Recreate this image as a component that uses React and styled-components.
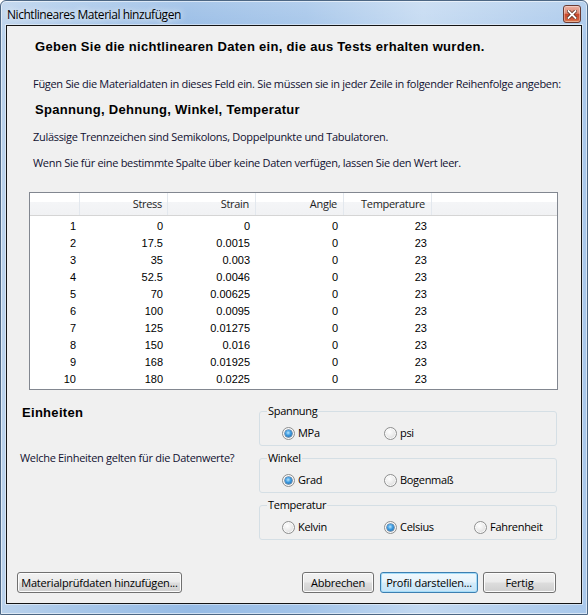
import React from 'react';
import styled, { createGlobalStyle, css } from 'styled-components';

const Global = createGlobalStyle`
  html, body { margin: 0; padding: 0; }
  body {
    width: 588px; height: 615px; overflow: hidden; background: #fff;
    font-family: "Open Sans", "Liberation Sans", sans-serif;
  }
  * { box-sizing: border-box; }
`;

const Window = styled.div`
  width: 588px; height: 615px;
  border: 1px solid #4d6784;
  border-radius: 6px 6px 0 0;
  background:
    linear-gradient(180deg, rgba(255,255,255,0.18) 0%, rgba(255,255,255,0) 40px),
    linear-gradient(90deg, #bad2ec 0%, #a8c7e9 12%, #96bbe5 32%, #a3c4e9 52%, #c3d9f1 72%, #b2ceed 90%, #a9c8eb 100%);
  box-shadow: inset 0 0 0 1px rgba(255,255,255,0.55);
  display: flex; flex-direction: column;
  padding: 0 5px 10px 5px;
`;

const TitleBar = styled.div`
  height: 24px; padding-top: 2px;
  display: flex; align-items: center;
`;

const Title = styled.div`
  font-size: 12px; letter-spacing: -0.45px; color: #000; padding-left: 1px;
  text-shadow: 0 0 6px rgba(255,255,255,0.9), 0 0 10px rgba(255,255,255,0.6);
`;

const CloseButton = styled.div`
  margin-left: auto; margin-right: 1px;
  width: 18px; height: 18px;
  border: 1px solid #6b3b33; border-radius: 3px;
  background: linear-gradient(180deg, #eab0a2 0%, #df8a74 45%, #c9472b 52%, #cf5d3c 85%, #e08a5e 100%);
  box-shadow: inset 0 0 0 1px rgba(255,255,255,0.35);
  display: flex; align-items: center; justify-content: center;
`;

const Client = styled.div`
  flex: 1;
  border: 1px solid #141414;
  box-shadow: 0 0 0 1px rgba(255,255,255,0.45);
  background: #f0f0f0;
  display: flex; flex-direction: column;
`;

const Heading = styled.div`
  font-family: "Liberation Sans", Arial, sans-serif;
  font-weight: bold; font-size: 13px; letter-spacing: 0.3px;
  line-height: 16px; color: #000;
  margin: ${p => p.$top}px 0 0 ${p => p.$left}px;
`;

const Para = styled.div`
  font-size: 11px; letter-spacing: -0.3px; line-height: 16px; color: #101030;
  white-space: nowrap;
  margin: ${p => p.$top}px 0 0 ${p => p.$left}px;
`;

const Table = styled.div`
  margin: 21px 0 0 22px;
  width: 529px; height: 198px;
  border: 1px solid #828790;
  background: #fff;
`;

const cols = css`
  display: grid;
  grid-template-columns: 50px 88px 88px 88px 88px 1fr;
`;

const HeaderRow = styled.div`
  ${cols};
  height: 23px;
  background: linear-gradient(180deg, #ffffff 0%, #ffffff 40%, #f4f5f7 41%, #f1f2f4 100%);
  border-bottom: 1px solid #d5d5d5;
`;

const HeaderCell = styled.div`
  font-size: 11px; letter-spacing: -0.3px; color: #1e1e1e;
  line-height: 22px; text-align: right;
  padding-right: ${p => p.$pad}px;
  border-right: ${p => (p.$last ? 'none' : '1px solid #e3e8ee')};
`;

const Rows = styled.div`
  padding-top: 2px;
`;

const Row = styled.div`
  ${cols};
  height: 17px;
`;

const Cell = styled.div`
  font-family: "Liberation Sans", Arial, sans-serif;
  font-size: 11px; line-height: 17px; color: #000;
  text-align: right;
  padding-right: ${p => p.$pad}px;
`;

const Units = styled.div`
  display: flex;
  margin-top: 14px;
`;

const UnitsLeft = styled.div`
  width: 252px;
  display: flex; flex-direction: column;
`;

const UnitsRight = styled.div`
  width: 298px;
  display: flex; flex-direction: column; gap: 5px;
`;

const Group = styled.fieldset`
  margin: 0; padding: 7px 0 4px 0;
  border: 1px solid #d5dfe5; border-radius: 3px;
  min-width: 0;
`;

const Legend = styled.legend`
  font-size: 11px; letter-spacing: -0.3px; line-height: 14px; color: #000;
  margin-left: 7px; padding: 0 1px;
`;

const RadioRow = styled.div`
  display: grid;
  grid-template-columns: 102px 90px auto;
  padding-left: 22px;
  height: 16px; align-items: center;
`;

const RadioLabel = styled.label`
  display: flex; align-items: center; gap: 3px;
  font-size: 11px; letter-spacing: -0.3px; color: #000; line-height: 16px;
  white-space: nowrap;
`;

const RadioCircle = styled.span`
  flex: none;
  width: 13px; height: 13px; border-radius: 50%;
  border: 1px solid #8e8f8f;
  background: radial-gradient(circle at 40% 35%, #ffffff 0%, #ececec 45%, #cfcfcf 100%);
  display: flex; align-items: center; justify-content: center;
  box-shadow: inset 0 0 0 1px rgba(255,255,255,0.8);
  &::after {
    content: '';
    display: ${p => (p.$checked ? 'block' : 'none')};
    width: 7px; height: 7px; border-radius: 50%;
    background: radial-gradient(circle at 45% 40%, #b7e6ff 0%, #3c9ae0 45%, #135d9c 100%);
    box-shadow: 0 0 0 0.5px #1b4e80;
  }
`;

const Footer = styled.div`
  margin-top: auto; margin-bottom: 10px;
  display: flex; align-items: center;
  padding: 0 25px 0 10px;
`;

const Button = styled.button`
  height: 21px; width: ${p => p.$w}px;
  margin-left: ${p => p.$ml || 0}px;
  font-family: "Open Sans", sans-serif; font-size: 11px; letter-spacing: -0.2px; color: #000;
  padding: 0; line-height: 19px;
  border-radius: 3px;
  border: 1px solid ${p => (p.$default ? '#3c7fb1' : '#707070')};
  background: ${p => p.$default
    ? 'linear-gradient(180deg, #f1f8fd 0%, #e6f3fb 48%, #d4ebf9 52%, #c6e4f7 100%)'
    : 'linear-gradient(180deg, #f2f2f2 0%, #ebebeb 48%, #dddddd 52%, #cfcfcf 100%)'};
  box-shadow: inset 0 0 0 1px ${p => (p.$default ? '#a5ddf9' : '#fcfcfc')};
`;

const Spacer = styled.div`flex: 1;`;

const data = [
  ['1', '0', '0', '0', '23'],
  ['2', '17.5', '0.0015', '0', '23'],
  ['3', '35', '0.003', '0', '23'],
  ['4', '52.5', '0.0046', '0', '23'],
  ['5', '70', '0.00625', '0', '23'],
  ['6', '100', '0.0095', '0', '23'],
  ['7', '125', '0.01275', '0', '23'],
  ['8', '150', '0.016', '0', '23'],
  ['9', '168', '0.01925', '0', '23'],
  ['10', '180', '0.0225', '0', '23'],
];
const pads = [4, 5, 6, 6, 5];

const Radio = ({ label, checked }) => (
  <RadioLabel>
    <RadioCircle $checked={checked} />
    {label}
  </RadioLabel>
);

export default function App() {
  return (
    <>
      <Global />
      <Window>
        <TitleBar>
          <Title>Nichtlineares Material hinzufügen</Title>
          <CloseButton>
            <svg width="10" height="9" viewBox="0 0 10 9">
              <path d="M1.5 1 L8.5 8 M8.5 1 L1.5 8" stroke="#5a2a20" strokeWidth="3.4" strokeLinecap="square" />
              <path d="M1.5 1 L8.5 8 M8.5 1 L1.5 8" stroke="#fff" strokeWidth="1.8" strokeLinecap="square" />
            </svg>
          </CloseButton>
        </TitleBar>
        <Client>
          <Heading $top={13} $left={28}>Geben Sie die nichtlinearen Daten ein, die aus Tests erhalten wurden.</Heading>
          <Para $top={21} $left={26}>Fügen Sie die Materialdaten in dieses Feld ein. Sie müssen sie in jeder Zeile in folgender Reihenfolge angeben:</Para>
          <Heading $top={10} $left={28}>Spannung, Dehnung, Winkel, Temperatur</Heading>
          <Para $top={11} $left={26}>Zulässige Trennzeichen sind Semikolons, Doppelpunkte und Tabulatoren.</Para>
          <Para $top={10} $left={26}>Wenn Sie für eine bestimmte Spalte über keine Daten verfügen, lassen Sie den Wert leer.</Para>
          <Table>
            <HeaderRow>
              <HeaderCell $pad={4}></HeaderCell>
              <HeaderCell $pad={5}>Stress</HeaderCell>
              <HeaderCell $pad={6}>Strain</HeaderCell>
              <HeaderCell $pad={6}>Angle</HeaderCell>
              <HeaderCell $pad={6}>Temperature</HeaderCell>
              <HeaderCell $last></HeaderCell>
            </HeaderRow>
            <Rows>
              {data.map((r) => (
                <Row key={r[0]}>
                  {r.map((v, i) => (
                    <Cell key={i} $pad={pads[i]}>{v}</Cell>
                  ))}
                  <Cell $pad={0} />
                </Row>
              ))}
            </Rows>
          </Table>
          <Units>
            <UnitsLeft>
              <Heading $top={1} $left={15}>Einheiten</Heading>
              <Para $top={29} $left={13}>Welche Einheiten gelten für die Datenwerte?</Para>
            </UnitsLeft>
            <UnitsRight>
              <Group>
                <Legend>Spannung</Legend>
                <RadioRow>
                  <Radio label="MPa" checked />
                  <Radio label="psi" />
                </RadioRow>
              </Group>
              <Group>
                <Legend>Winkel</Legend>
                <RadioRow>
                  <Radio label="Grad" checked />
                  <Radio label="Bogenmaß" />
                </RadioRow>
              </Group>
              <Group>
                <Legend>Temperatur</Legend>
                <RadioRow>
                  <Radio label="Kelvin" />
                  <Radio label="Celsius" checked />
                  <Radio label="Fahrenheit" />
                </RadioRow>
              </Group>
            </UnitsRight>
          </Units>
          <Footer>
            <Button $w={165}>Materialprüfdaten hinzufügen...</Button>
            <Spacer />
            <Button $w={72}>Abbrechen</Button>
            <Button $w={98} $ml={6} $default>Profil darstellen...</Button>
            <Button $w={73} $ml={5}>Fertig</Button>
          </Footer>
        </Client>
      </Window>
    </>
  );
}
